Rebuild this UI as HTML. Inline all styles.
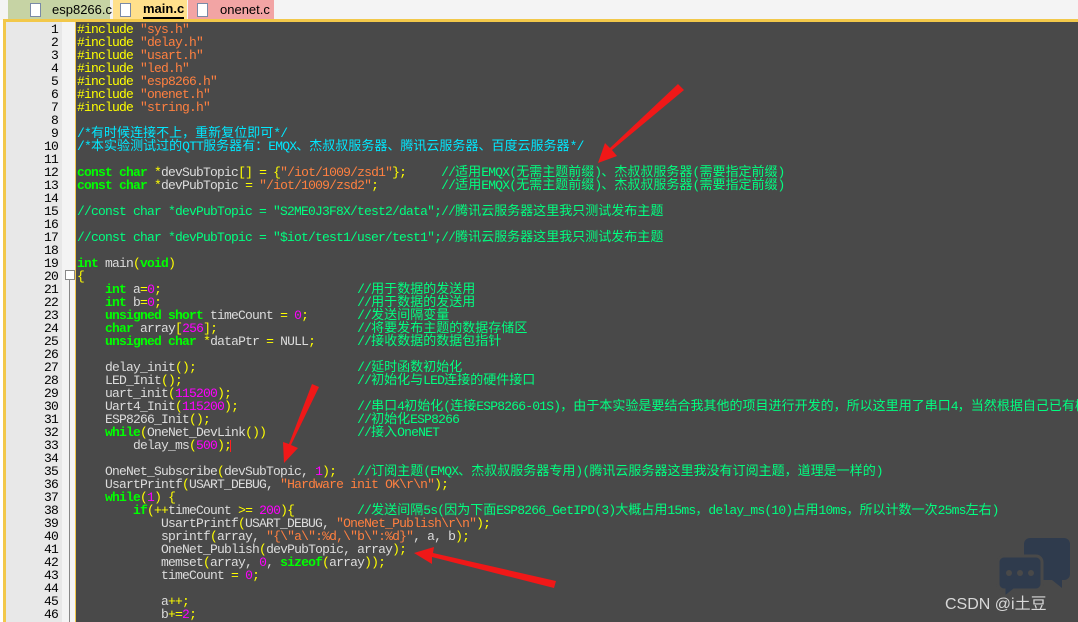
<!DOCTYPE html>
<html><head><meta charset="utf-8"><style>
*{margin:0;padding:0}
body{width:1078px;height:622px;overflow:hidden;background:#fff;position:relative;font-family:"Liberation Mono","Noto Sans CJK SC",monospace}
.tabs{position:absolute;left:0;top:0;width:1078px;height:20px;background:#f4f4f4}
.tab{position:absolute;top:0;height:19px;font:13px "Liberation Sans",sans-serif;line-height:19px;color:#000}
.ic{position:absolute;top:3px;width:9px;height:12px;background:#fff;border:1px solid #7a8aa8}
.frame{position:absolute;left:3px;top:19px;width:1075px;height:603px;background:#f2c84a}
.gut{position:absolute;left:6px;top:22px;width:56px;height:600px;background:#e8e8e8}
.fold{position:absolute;left:62px;top:22px;width:13px;height:600px;background:#f4f4f4}
.code{position:absolute;left:76px;top:22px;width:1002px;height:600px;background:#494949}
#L{position:absolute;left:0;top:0;width:1078px;height:622px;overflow:hidden}
.ln{position:absolute;left:6px;width:52px;text-align:right;font-size:13px;letter-spacing:-0.8px;line-height:13px;color:#000;font-family:"Liberation Mono",monospace}
.l{position:absolute;left:77px;white-space:pre;font-size:13px;letter-spacing:-0.8px;line-height:13px;color:#dcdcdc}
.w{letter-spacing:0}
.k{color:#00ff00;font-weight:bold}.p{color:#ffff00}.s{color:#ff8040}.c{color:#00ff80}.cc{color:#00e8ff}.n{color:#ff00ff}.y{color:#ffff00}
</style></head><body>
<div class="tabs">
<div class="tab" style="left:8px;width:102px;background:#c6d3a4;"><span class="ic" style="left:22px"></span><span style="position:absolute;left:44px">esp8266.c</span></div>
<div class="tab" style="left:113px;width:74px;background:#ffe08c;"><span class="ic" style="left:7px"></span><span style="position:absolute;left:30px;font-weight:bold;border-bottom:2px solid #000;line-height:16px;top:1px">main.c</span></div>
<div class="tab" style="left:188px;width:86px;background:#f2a4a4;"><span class="ic" style="left:9px"></span><span style="position:absolute;left:32px">onenet.c</span></div>
</div>
<div class="frame"></div>
<div class="gut"></div><div class="fold"></div><div class="code"></div>
<div style="position:absolute;left:65px;top:270px;width:8px;height:8px;border:1px solid #888;background:#fff"></div>
<div style="position:absolute;left:69px;top:280px;width:1px;height:342px;background:#888"></div>
<div style="position:absolute;left:230px;top:440px;width:1px;height:12px;background:#ff2020"></div>
<div id="L"></div>
<svg style="position:absolute;left:0;top:0" width="1078" height="622">
<g fill="#f01818">
<polygon points="678,84 684,90 612,150 617,156 598,163 605,143 610,148"/>
<polygon points="312,384 319,387 291,445 298,448 284,463 283,442 289,444"/>
<polygon points="556,581 554,588 432,557 432,564 414,553 434,547 433,553"/>
</g>
<g fill="#2f3b4d">
<path d="M1030 538h34a6 6 0 0 1 6 6v30a6 6 0 0 1-6 6h-2v8l-10-8h-22a6 6 0 0 1-6-6v-30a6 6 0 0 1 6-6z"/>
<path d="M1006 556h30a6 6 0 0 1 6 6v22a6 6 0 0 1-6 6h-22l-10 8v-8h-0a6 6 0 0 1-6-6v-22a6 6 0 0 1 6-6z" stroke="#494949" stroke-width="3"/>
</g>
<g fill="#494949"><circle cx="1009" cy="573" r="3"/><circle cx="1020" cy="573" r="3"/><circle cx="1031" cy="573" r="3"/></g>
<text x="945" y="609" font-family="Liberation Sans,Noto Sans CJK SC,sans-serif" font-size="16" fill="#d8d8d8">CSDN @i土豆</text>
</svg>
<script>
var L=[
'<span class="p">#include</span> <span class="s">"sys.h"</span>',
'<span class="p">#include</span> <span class="s">"delay.h"</span>',
'<span class="p">#include</span> <span class="s">"usart.h"</span>',
'<span class="p">#include</span> <span class="s">"led.h"</span>',
'<span class="p">#include</span> <span class="s">"esp8266.h"</span>',
'<span class="p">#include</span> <span class="s">"onenet.h"</span>',
'<span class="p">#include</span> <span class="s">"string.h"</span>',
'',
'<span class="cc">/*有时候连接不上，重新复位即可*/</span>',
'<span class="cc">/*本实验测试过的QTT服务器有：EMQX、杰叔叔服务器、腾讯云服务器、百度云服务器*/</span>',
'',
'<span class="k">const char</span> <span class="y">*</span>devSubTopic<span class="y">[] = {</span><span class="s">"/iot/1009/zsd1"</span><span class="y">};</span>     <span class="c">//适用EMQX(无需主题前缀)、杰叔叔服务器(需要指定前缀)</span>',
'<span class="k">const char</span> <span class="y">*</span>devPubTopic <span class="y">=</span> <span class="s">"/iot/1009/zsd2"</span><span class="y">;</span>         <span class="c">//适用EMQX(无需主题前缀)、杰叔叔服务器(需要指定前缀)</span>',
'',
'<span class="c">//const char *devPubTopic = "S2ME0J3F8X/test2/data";//腾讯云服务器这里我只测试发布主题</span>',
'',
'<span class="c">//const char *devPubTopic = "$iot/test1/user/test1";//腾讯云服务器这里我只测试发布主题</span>',
'',
'<span class="k">int</span> main<span class="y">(</span><span class="k">void</span><span class="y">)</span>',
'<span class="y">{</span>',
'    <span class="k">int</span> a<span class="y">=</span><span class="n">0</span><span class="y">;</span>                            <span class="c">//用于数据的发送用</span>',
'    <span class="k">int</span> b<span class="y">=</span><span class="n">0</span><span class="y">;</span>                            <span class="c">//用于数据的发送用</span>',
'    <span class="k">unsigned short</span> timeCount <span class="y">=</span> <span class="n">0</span><span class="y">;</span>       <span class="c">//发送间隔变量</span>',
'    <span class="k">char</span> array<span class="y">[</span><span class="n">256</span><span class="y">];</span>                    <span class="c">//将要发布主题的数据存储区</span>',
'    <span class="k">unsigned char</span> <span class="y">*</span>dataPtr <span class="y">=</span> NULL<span class="y">;</span>      <span class="c">//接收数据的数据包指针</span>',
'',
'    delay_init<span class="y">();</span>                       <span class="c">//延时函数初始化</span>',
'    LED_Init<span class="y">();</span>                         <span class="c">//初始化与LED连接的硬件接口</span>',
'    uart_init<span class="y">(</span><span class="n">115200</span><span class="y">);</span>',
'    Uart4_Init<span class="y">(</span><span class="n">115200</span><span class="y">);</span>                 <span class="c">//串口4初始化(连接ESP8266-01S)，由于本实验是要结合我其他的项目进行开发的，所以这里用了串口4，当然根据自己已有模块</span>',
'    ESP8266_Init<span class="y">();</span>                     <span class="c">//初始化ESP8266</span>',
'    <span class="k">while</span><span class="y">(</span>OneNet_DevLink<span class="y">())</span>             <span class="c">//接入OneNET</span>',
'        delay_ms<span class="y">(</span><span class="n">500</span><span class="y">);</span>',
'',
'    OneNet_Subscribe<span class="y">(</span>devSubTopic, <span class="n">1</span><span class="y">);</span>   <span class="c">//订阅主题(EMQX、杰叔叔服务器专用)(腾讯云服务器这里我没有订阅主题，道理是一样的)</span>',
'    UsartPrintf<span class="y">(</span>USART_DEBUG, <span class="s">"Hardware init OK\\r\\n"</span><span class="y">);</span>',
'    <span class="k">while</span><span class="y">(</span><span class="n">1</span><span class="y">)</span> <span class="y">{</span>',
'        <span class="k">if</span><span class="y">(++</span>timeCount <span class="y">&gt;=</span> <span class="n">200</span><span class="y">){</span>         <span class="c">//发送间隔5s(因为下面ESP8266_GetIPD(3)大概占用15ms，delay_ms(10)占用10ms，所以计数一次25ms左右)</span>',
'            UsartPrintf<span class="y">(</span>USART_DEBUG, <span class="s">"OneNet_Publish\\r\\n"</span><span class="y">);</span>',
'            sprintf<span class="y">(</span>array, <span class="s">"{\\"a\\":%d,\\"b\\":%d}"</span>, a, b<span class="y">);</span>',
'            OneNet_Publish<span class="y">(</span>devPubTopic, array<span class="y">);</span>',
'            memset<span class="y">(</span>array, <span class="n">0</span>, <span class="k">sizeof</span><span class="y">(</span>array<span class="y">));</span>',
'            timeCount <span class="y">=</span> <span class="n">0</span><span class="y">;</span>',
'',
'            a<span class="y">++;</span>',
'            b<span class="y">+=</span><span class="n">2</span><span class="y">;</span>'
];
var h='';
for(var i=0;i<L.length;i++){var t=23+i*13;
var s=L[i].replace(/[\u2e80-\uffff]/g,function(m){return '<span class="w">'+m+'</span>';});
h+='<div class="ln" style="top:'+t+'px">'+(i+1)+'</div><div class="l" style="top:'+t+'px">'+s+'</div>';}
document.getElementById('L').innerHTML=h;
</script>
</body></html>
